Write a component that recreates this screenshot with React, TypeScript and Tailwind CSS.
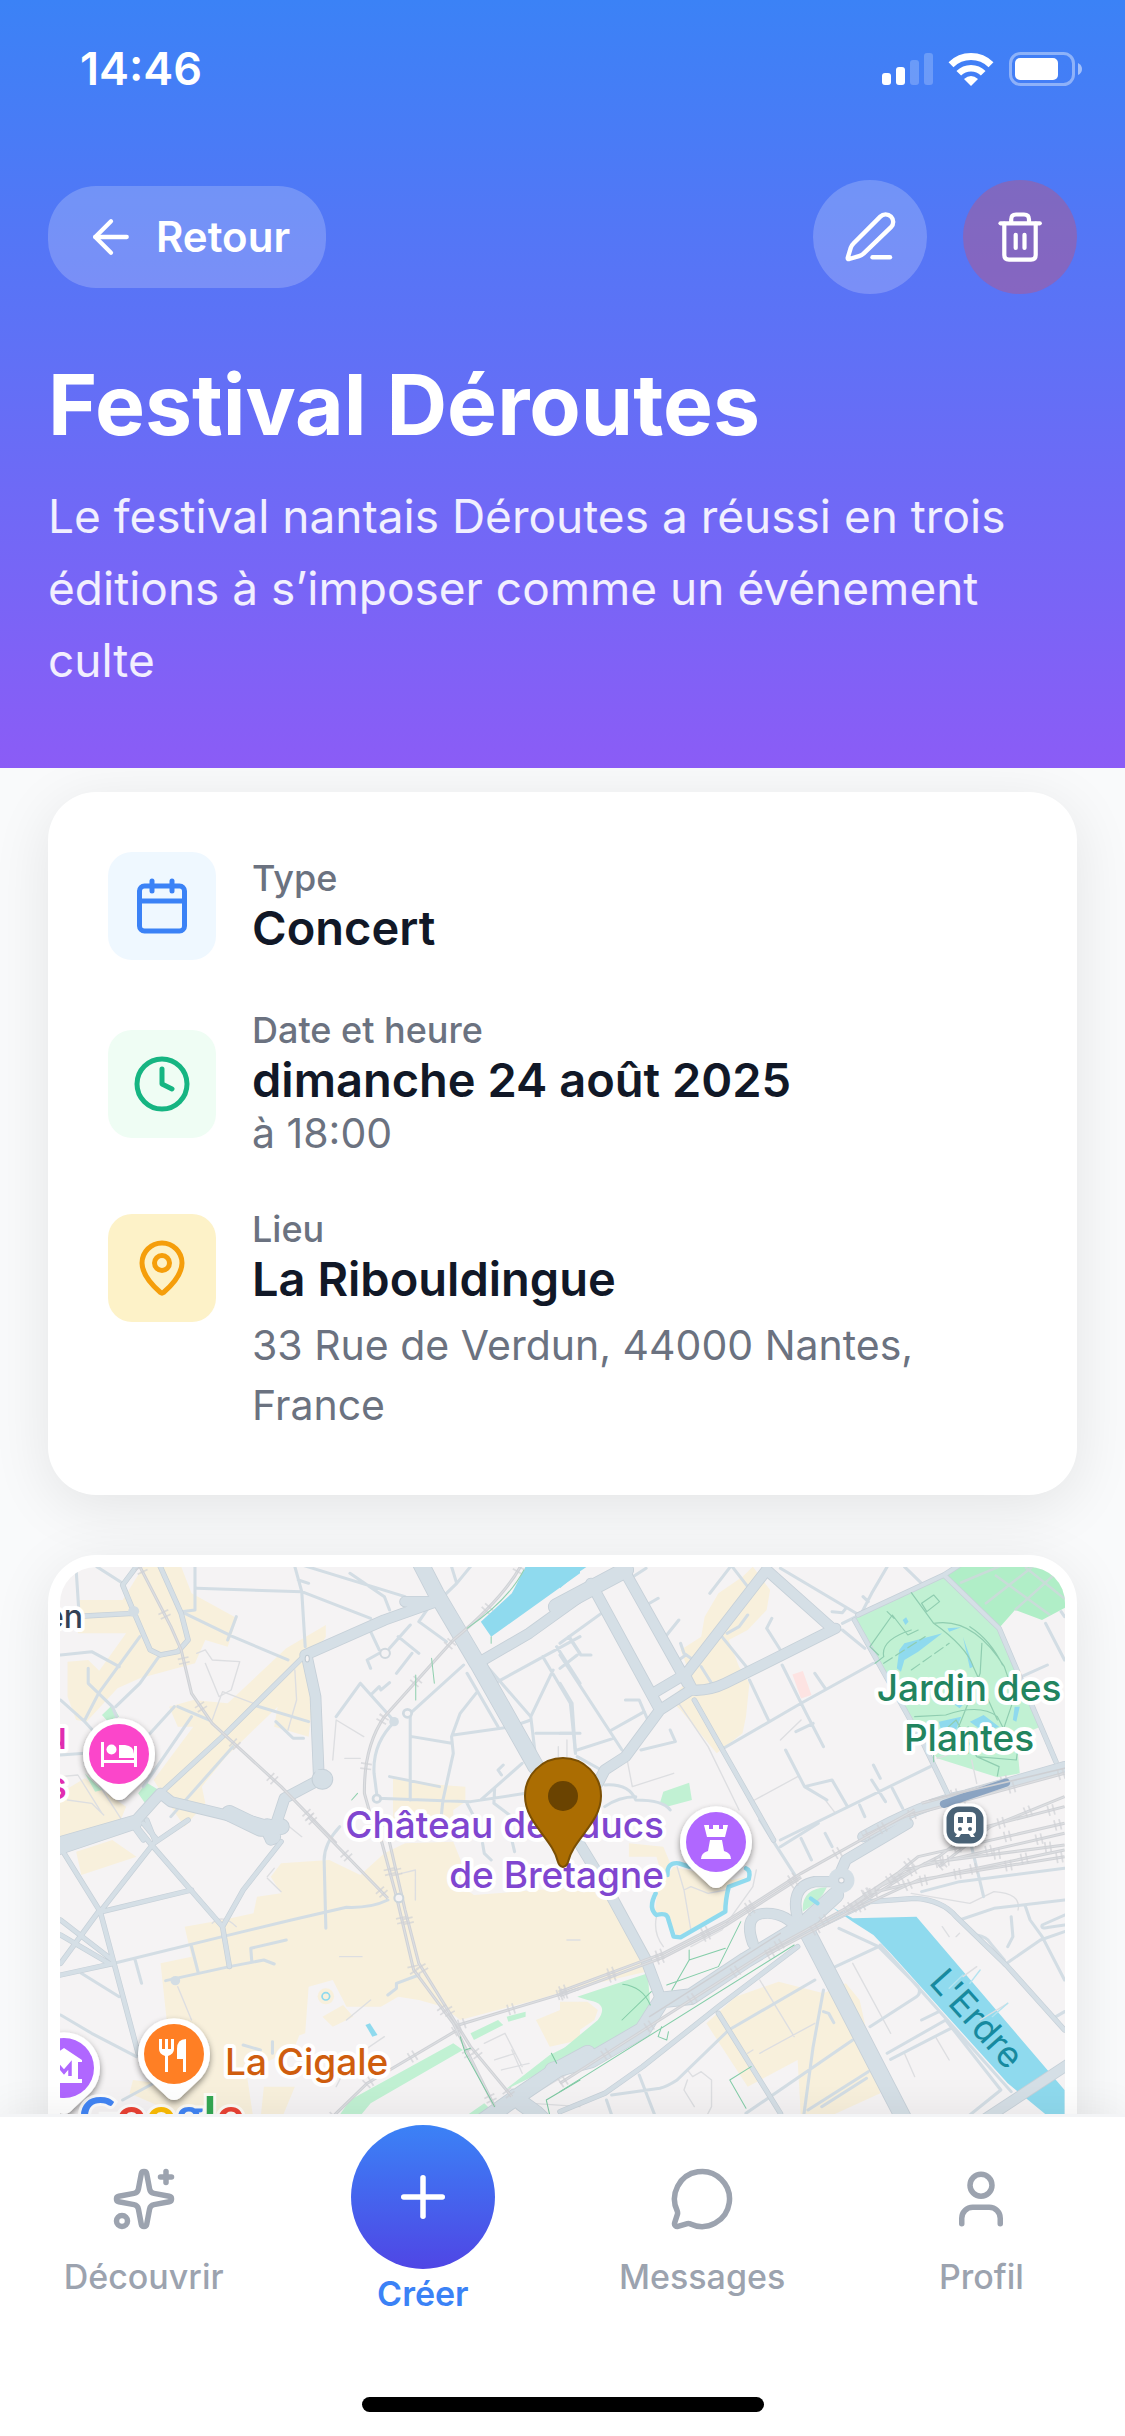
import React from 'react';
import { ArrowLeft, Calendar, Clock, MapPin, MessageCircle, Plus, Sparkles, User } from 'lucide-react';

/* ---------- Status bar ---------- */

function StatusBar() {
  return (
    <div className="flex h-[138px] items-center justify-between pl-20 pr-[43px] text-white">
      <span className="text-[45px] leading-[54px] font-semibold">14:46</span>
      <div className="flex items-center gap-[15px]">
        <svg width="51" height="32" viewBox="0 0 51 32" fill="#fff" aria-label="Réseau">
          <rect x="0" y="20" width="9" height="12" rx="3" />
          <rect x="14" y="14" width="9" height="18" rx="3" />
          <rect x="28" y="7" width="9" height="25" rx="3" opacity=".22" />
          <rect x="42" y="0" width="9" height="32" rx="3" opacity=".22" />
        </svg>
        <svg width="46" height="33" viewBox="0 0 46 33" aria-label="Wi-Fi">
          <path d="M3 11.8A28.500 28.500 0 0 1 43 11.800" fill="none" stroke="#fff" strokeWidth="7" />
          <path d="M10.800 20.300A17 17 0 0 1 35.200 20.300" fill="none" stroke="#fff" strokeWidth="6.500" />
          <path d="M23 33L16 26Q23 20 30 26Z" fill="#fff" />
        </svg>
        <svg width="73" height="34" viewBox="0 0 73 34" aria-label="Batterie">
          <rect x="1.5" y="1.5" width="63" height="31" rx="10" fill="none" stroke="#fff" strokeWidth="3" opacity=".4" />
          <rect x="6" y="6" width="43" height="22" rx="5" fill="#fff" />
          <path d="M69 11Q73 13 73 17T69 23Z" fill="#fff" opacity=".5" />
        </svg>
      </div>
    </div>
  );
}

function PencilIcon() {
  return (
    <svg width="54" height="54" viewBox="0 0 54 54" fill="none" stroke="currentColor" strokeWidth="4.4" strokeLinecap="round" strokeLinejoin="round">
      <path d="M37.3 6.6A7.4 7.4 0 0 1 48 17.2L20.5 43.6Q18.6 45.3 16 46.1L6.2 49Q4.4 49.4 4.8 47.6L7.8 37.6Q8.4 35.5 10.2 33.8Z" />
      <path d="M29.5 47.3H47" />
    </svg>
  );
}

function TrashIcon() {
  return (
    <svg width="54" height="54" viewBox="0 0 54 54" fill="none" stroke="currentColor" strokeWidth="4.2" strokeLinecap="round" strokeLinejoin="round">
      <path d="M7.5 13.3H46.8" />
      <path d="M18.2 13V9.4Q18.2 4.5 23 4.5H31Q36 4.5 36 9.4V13" />
      <path d="M11.3 13.5V45Q11.3 49.6 16 49.6H38Q42.7 49.6 42.7 45V13.5" />
      <path d="M22.7 24.8V38M31.5 24.8V38" />
    </svg>
  );
}

function Header() {
  return (
    <header className="relative z-10 shrink-0 bg-linear-to-b/srgb from-[#3b82f6] to-[#8b5cf6]">
      <StatusBar />
      <div className="px-12 pt-[42px] pb-[72px] text-white">
        <div className="flex items-center justify-between">
          <button type="button" className="flex h-[102px] items-center gap-[18px] rounded-[48px] bg-white/20 px-9">
            <ArrowLeft size={54} strokeWidth={1.9} />
            <span className="text-[42px] leading-[48px] font-semibold">Retour</span>
          </button>
          <div className="flex gap-9">
            <button type="button" aria-label="Modifier" className="flex size-[114px] items-center justify-center rounded-full bg-white/20">
              <PencilIcon />
            </button>
            <button type="button" aria-label="Supprimer" className="flex size-[114px] items-center justify-center rounded-full bg-[#ef4444]/30">
              <TrashIcon />
            </button>
          </div>
        </div>
        <h1 className="mt-[60px] text-[84px] leading-[102px] font-bold">Festival Déroutes</h1>
        <p className="mt-6 text-[46px] leading-[72px] text-white/90">
          Le festival nantais Déroutes a réussi en trois éditions à s’imposer comme un événement culte
        </p>
      </div>
    </header>
  );
}

/* ---------- Details ---------- */

function Tile({ className, children }: { className: string; children: React.ReactNode }) {
  return <div className={`flex size-[108px] shrink-0 items-center justify-center rounded-3xl ${className}`}>{children}</div>;
}

function Field({ label, value, children }: { label: string; value: string; children?: React.ReactNode }) {
  return (
    <div className="min-w-0 flex-1">
      <div className="text-[36px] leading-[42px] font-medium text-[#6b7280]">{label}</div>
      <div className="text-[47px] leading-[57px] font-semibold text-[#111827]">{value}</div>
      {children}
    </div>
  );
}

function Details() {
  return (
    <section className="flex flex-col gap-[49px] rounded-[48px] bg-white p-[60px] shadow-[0_12px_60px_rgba(0,0,0,0.09)]">
      <div className="flex items-center gap-9">
        <Tile className="bg-[#eff8ff] text-[#3b82f6]">
          <Calendar size={60} />
        </Tile>
        <Field label="Type" value="Concert" />
      </div>
      <div className="flex items-center gap-9">
        <Tile className="bg-[#effdf4] text-[#16b582]">
          <Clock size={60} />
        </Tile>
        <Field label="Date et heure" value="dimanche 24 août 2025">
          <div className="text-[41px] leading-[51px] text-[#6b7280]">à 18:00</div>
        </Field>
      </div>
      <div className="flex items-start gap-9">
        <div className="pt-[6px]">
          <Tile className="bg-[#fdf2c8] text-[#f59e0b]">
            <MapPin size={60} />
          </Tile>
        </div>
        <Field label="Lieu" value="La Ribouldingue">
          <div className="mt-2 text-[41px] leading-[60px] text-[#6b7280]">33 Rue de Verdun, 44000 Nantes, France</div>
        </Field>
      </div>
    </section>
  );
}

/* ---------- Map ---------- */

const NW = 'translate(-20 -27) scale(.3444 .3333)';
const NE = 'translate(500 -27) scale(.3444 .3333)';
const SW = 'translate(-20 253) scale(.3444 .3333)';
const SE = 'translate(500 253) scale(.3444 .3333)';

type Sector = {
  at: string;
  sand: string;
  park: string;
  water: string;
  minor: string;
  mid: string;
  major: string;
  wide: string;
  faint: string;
  rail: string;
};

const SECTORS: Sector[] = [
  {
    at: NW,
    sand: 'M300 80H410L440 160L572 235L545 320L480 300L450 370L290 415L225 445L135 545L105 540L80 470V365L140 360L172 392L250 280H110V180H240ZM830 255L715 325L545 490L445 480L375 500L400 560L445 560L330 720L360 770L420 860L480 790L470 740L540 650L690 500L680 560L780 590L790 500L770 390L830 290ZM58 760L130 715L250 800L230 850L58 895ZM1025 715L1165 735L1235 740V785L1200 810V840H1025Z',
    park: 'M180 525L210 495L230 530L195 542ZM285 760L310 728L345 750L305 790ZM130 700L180 750L160 755Z',
    water: 'M1410 80H1568V100L1310 290L1280 245L1370 160Z',
    minor:
      'M165 80L240 130M450 80V210L410 215M455 145L760 155L960 235M740 80L760 155L770 320M410 215L560 290L720 360M745 70L1060 170M750 120L780 130M105 90L112 200M60 345L150 335L230 380M290 290L170 460L130 540M345 350L290 430L220 500M140 385V430L210 500L222 530M60 480L130 545L170 590M390 500L320 580M400 500L490 540M440 530L300 740M560 620L380 830M620 495L780 545M570 230L545 300M685 545L735 595H765M930 430L860 530M930 430L1030 545M1075 520V780M1075 520L1230 375M1030 545Q965 610 970 700L980 780M1080 590L1195 610M1270 455L1220 520L1195 590L1200 640L1170 780L1165 830M1200 585L1370 560L1425 540M980 775L1250 785L1410 760M1280 780L1400 670M1015 710L1160 740M1320 430L1568 290M1290 370L1425 530L1440 660M1425 530L1490 390M1240 400L1330 560M1440 580H1568M960 275L985 330M1015 325L1075 255M1040 290L1100 340M1035 400L1080 340M985 340L950 360L960 385M1100 245L1130 200M1100 245L1180 305M1195 80L1210 130L1250 80M1180 160L1210 130M60 645L130 640M900 100L1000 170L1015 210M1460 350L1540 490L1555 640M1500 320L1568 430M1540 295L1568 340M960 465L985 440L990 450L1015 428M1320 745L1318 790L1370 830M1345 675L1330 690L1340 705M1240 790L1260 830',
    mid: 'M770 345L540 580L350 760M280 80L240 135L270 210L320 330L350 345L400 335L430 300L410 220L345 70M270 220L130 228M300 850L340 900M275 865L300 900',
    major: 'M770 345L1000 240L1150 185M1060 185H1140M775 350L800 470L810 720L710 775L670 900M670 860L620 845L380 785L350 760M350 760L280 840L60 905M1270 370L1420 280L1568 170',
    wide: 'M1100 60L1150 160L1270 370M1265 360L1440 680',
    faint: 'M455 340L480 330L500 360L580 365L555 450L520 470L480 370M530 455L500 540M530 455L620 490M740 390L745 480L720 570M850 660L860 540L940 590M885 655L930 655M60 710L110 705L180 820M150 700L250 860M80 780L150 790L185 825M1505 620V650M1530 600V650',
    rail: 'M290 80L380 260L410 330L440 460L500 550L700 740L860 910M1395 80Q1340 180 1200 300L1000 530Q940 620 942 760L980 900',
  },
  {
    at: NE,
    sand: 'M560 80L610 150L600 210L545 270L490 300L520 380L550 430L540 530L530 580L455 640L350 510L320 480L380 410L350 330L410 290L420 230L460 160L530 110Z',
    park: 'M855 235L1115 105L1275 265L1395 560L1325 590L1335 700L1270 712L1095 655L1000 510ZM290 790L300 755L375 728L383 780L310 800Z',
    water: 'M0 80H78L50 100L0 145ZM985 330L1000 310L1110 280L1040 335L1000 360L990 395L978 385ZM1125 265L1165 262L1130 275ZM1170 290L1200 380L1190 385ZM1100 545L1165 530L1150 570L1105 565ZM1190 545L1230 525L1275 560L1230 575ZM1320 500L1335 500L1325 545L1315 540ZM1140 490H1175L1160 505ZM995 240L1005 232L1012 245L1003 255Z',
    minor:
      'M0 310L120 220M0 345L180 630M25 290L60 345H90M0 385L50 345M150 570L245 515M50 630L155 595M235 630L335 605L320 570M190 480H230L255 540M0 430L35 490L45 640M0 580H40M310 285L345 240M205 115L250 85M260 190L285 175M350 310L360 340L380 355M345 360L365 345M435 160L495 80M500 80L545 140M470 290L545 385M485 280L520 260L545 225M640 330L600 265L615 235M410 380L440 430M550 420L605 540M645 375L715 520L765 620M740 400L770 445M910 370L700 490L475 625M685 575L735 550M640 85L860 220M790 215L820 218L830 205M875 220L905 160L950 80M880 170L895 185M1000 80L1050 130M820 270L885 325M1075 680L640 900M655 630L710 740L775 780M710 740L790 720L835 800M910 675L930 715M905 720L945 785M965 745L995 805M870 795L885 830M1410 250L1465 360M1340 410L1415 375M1455 215L1465 230M130 735Q200 730 220 780Q300 780 320 810M130 800Q170 770 220 770M50 650L120 690M820 250L860 230',
    mid: 'M390 480L620 900M855 240L1050 600L1125 760M865 225L1115 105L1160 75M1115 105L1275 265L1440 665',
    major: 'M90 130L285 500M180 80L370 430M600 90L360 410M600 90L790 265M800 265L480 430Q430 455 380 450L290 510L190 650L130 690L110 730M270 460L360 405M360 400L385 450M1465 680L1180 765Q1050 790 880 890',
    wide: 'M-10 200L190 90',
    faint: 'M345 490L430 620L520 810M565 780L690 710M195 660L210 740L330 700M1095 655L1140 640M1195 660L1210 730M110 140L180 120M770 780L800 820M700 540L640 600',
    rail: 'M1465 700L1180 780L1000 830L880 890M1300 720L1050 790',
  },
  {
    at: SW,
    sand: 'M1060 70L1200 65L1225 130V200L1260 225L1568 200V500L1440 540L1220 600L1170 560L1100 540L1040 530L990 560L890 560L850 480L780 500L770 640L690 670L560 720L450 760L370 620L350 430L440 410L420 320L530 300L620 280L630 230L700 220L670 170L700 130L840 120L930 165L1000 100ZM105 95L210 60L280 110L120 165ZM58 0H240L58 80ZM820 590L880 555L910 590L850 620ZM1440 600L1568 545V660L1480 680ZM500 700L690 660L770 600L740 680L600 760L620 900H440L260 820L270 780L340 790ZM650 800H740L700 900H640Z',
    park: 'M860 900L900 840L1200 670L1228 690L960 850L920 900ZM1250 640L1330 600L1345 615L1260 660ZM1355 590L1410 575V590L1360 605ZM1350 810L1480 705L1568 660V700L1430 770ZM1220 900L1290 850L1310 870L1280 900Z',
    water: 'M945 615L958 610L980 645L965 650Z',
    minor:
      'M215 430L530 350L730 300L890 262Q960 265 1010 240M365 482L550 440L650 420L680 432M440 380L460 460M275 415L295 490M615 425L612 385L715 360M830 325L825 120Q825 70 870 20M120 460L230 530M60 585L150 640L280 710M1010 525L1035 505V490L1100 465M240 840L330 790M1285 70L1290 100L1310 120M1370 60L1378 95M590 675L640 690M675 665V700',
    mid: 'M70 100L175 275L215 430L285 700M175 275L330 70L430 0M270 5L320 70L530 320L550 440M310 0L335 65M530 320L590 210L700 65M180 275L440 210M170 275L60 430M60 300L210 420M60 345L200 430M60 465L215 430',
    major: 'M50 90L280 10',
    wide: 'M550 -20L640 25L700 20M660 20L675 50M1290 900L1400 820L1500 750L1590 700M1380 830L1400 850L1440 880L1480 920',
    faint: 'M660 170L680 145M660 175L700 215M500 310Q530 280 570 320M870 410H935M1290 670L1350 640L1400 740M1320 720L1380 700M1340 750L1420 730M1370 690L1400 760M890 600L960 540M1000 650L900 720L860 800M1050 160L1090 150V240M1420 830L1568 740M1430 850L1568 860M400 500L440 600M1530 360H1568M700 0L760 50',
    rail: 'M780 -10L1010 235M975 0L1035 230L1085 450L1200 610L1320 860M1000 0L1060 270L1100 430L1250 680L1370 830M1215 615L1568 505M840 900L950 790L1220 625',
  },
  {
    at: SE,
    sand: 'M0 210H130L260 400L250 455L0 515ZM200 70L300 80L320 130L300 180L280 110H200ZM285 200L330 140L500 180L540 170L490 200L480 270L340 350L310 280L275 280ZM0 545L80 545L110 570L100 600L0 670ZM425 610L510 530L635 485L765 520L830 490L870 540L930 820L760 900H700L690 720L545 800Z',
    park: 'M50 530L255 460L262 560L240 600L130 680L40 718L5 690L110 600Q145 550 80 540ZM705 275Q700 205 775 202Q760 240 705 275Z',
    water: 'M790 262L850 295L1035 290L1465 810V900H1430L1300 790L960 400L910 345L850 305Z',
    minor:
      'M800 440L925 380L810 325M925 380L1040 500Q1050 520 1035 530L900 620M930 375L1310 815M765 510L735 680L708 885M740 480L490 630L340 780Q310 800 290 805L150 825M850 660L540 880M895 755L720 870M890 775L760 860M230 765L275 885M950 700L1120 600L1280 810M960 718L1135 625M1050 600L1100 575M580 0L685 170M640 80L750 10M700 55L730 120M770 40L790 80M1050 215L1160 185L1465 145M1160 300L1260 265L1465 240M1350 255L1365 300L1400 350L1465 480M1290 435L1395 360L1465 335M1210 345Q1240 350 1250 370L1290 420M1310 290L1315 350L1300 380M1465 285L1400 315Q1395 328 1420 322L1465 315M1195 80L1230 230M135 840L150 885M1440 590L1465 575M765 575L780 580L795 608M1190 885L1280 810',
    mid: 'M690 380L460 560L240 740L130 820L0 875M460 580L640 880M730 330L900 245L1030 235Q1110 240 1150 290L1300 440L1465 630',
    major: 'M50 60L150 230L250 420L290 530M560 370Q530 280 600 280Q660 280 690 330M695 310Q660 200 740 185H820M805 180L830 120L1010 10M1480 730L1230 900',
    wide: 'M-20 750L90 720L240 630L295 540L380 530L540 420L700 320L800 225M720 340L860 620L1000 900',
    faint: 'M340 140L360 210L380 200L430 220L480 210M360 210L380 330M580 480L680 650M850 430L960 640M580 700L740 610M300 380Q270 340 280 290M380 380L470 330L560 200L570 150M1020 220L1190 250L1260 215Q1340 220 1330 270M1000 700L1030 770M1090 650L1130 720M1110 320L1130 350M1150 350L1160 340M370 750L385 770L410 755L440 780V860L420 900M370 780L360 810L390 860M560 690L545 700M1170 470L1210 440M1220 600L1300 550',
    rail: 'M0 515L300 400L480 305L700 160L1030 -30M0 527L300 412L480 317L700 172M0 790L600 395L830 265L980 160L1040 110L1465 10M600 405L840 275L1040 180L1465 110M830 270L1000 150L1465 40M850 265L1060 130L1465 75M880 225L1100 110L1200 30L1465 -40M900 220L1140 160L1465 90M1100 140L1250 20L1465 -70',
  },
];

function Pin({ x, y, color, children }: { x: number; y: number; color: string; children: React.ReactNode }) {
  return (
    <g transform={`translate(${x} ${y})`}>
      <path d="M0 46Q-5 46 -9 41L-27 24A36 36 0 1 1 27 24L9 41Q5 46 0 46Z" fill="#fff" filter="url(#pin-shadow)" />
      <circle r="30" fill={color} />
      <g fill="#fff">{children}</g>
    </g>
  );
}

function CityMap() {
  return (
    <svg
      viewBox="0 0 1005 600"
      preserveAspectRatio="xMidYMin slice"
      className="block h-[600px] w-full rounded-[36px] bg-[#f5f3f4] font-[Inter,sans-serif]"
      role="img"
      aria-label="Carte du quartier"
    >
      <defs>
        <filter id="pin-shadow" x="-30%" y="-30%" width="160%" height="170%">
          <feDropShadow dx="0" dy="3" stdDeviation="3" floodOpacity=".45" />
        </filter>
      </defs>

      {SECTORS.map((s) => (
        <g key={s.at} transform={s.at}>
          <path d={s.sand} fill="#f8f0dc" />
          <path d={s.park} fill="#c1f1d3" />
          <path d={s.water} fill="#8fdaee" />
        </g>
      ))}
      <path d="M884 8L904 -5H1010V38L982 53L955 43L940 60Z" fill="#b0eec7" />
      <path d="M900 16L950 -5M925 37L985 -10M935 8L990 48M965 0L1005 32M955 43L1005 -2" stroke="#c9dcd8" strokeWidth="2.5" />

      <g fill="none" strokeLinecap="round" strokeLinejoin="round">
        {SECTORS.map((s) => (
          <g key={s.at} transform={s.at} stroke="#dddee1">
            <path d={s.faint} strokeWidth="4" />
            <path d={s.minor} stroke="#d3dde4" strokeWidth="9" />
          </g>
        ))}
        {SECTORS.map((s) => (
          <g key={s.at} transform={s.at} stroke="#c6d0d8">
            <path d={s.mid} strokeWidth="16" />
            <path d={s.major} strokeWidth="34" />
            <path d={s.wide} strokeWidth="50" />
          </g>
        ))}
        {SECTORS.map((s) => (
          <g key={s.at} transform={s.at} stroke="#d5dfe6">
            <path d={s.mid} strokeWidth="12" />
            <path d={s.major} strokeWidth="29" />
            <path d={s.wide} strokeWidth="45" />
          </g>
        ))}
        {SECTORS.map((s) => (
          <g key={s.at} transform={s.at} stroke="#d0d2d6" strokeLinecap="butt">
            <path d={s.rail} strokeWidth="9" />
            <path d={s.rail} stroke="#dddfe2" strokeWidth="3" />
            <path d={s.rail} strokeWidth="32" strokeDasharray="5 10 5 130" opacity=".7" />
          </g>
        ))}
        <g transform={NW}>
          <circle cx="820" cy="718" r="30" fill="#d5dfe6" stroke="#c6d0d8" strokeWidth="3" />
          <path d="M800 740V690H824V735" fill="#d5dfe6" />
          <circle cx="1002" cy="340" r="14" stroke="#d0d8de" strokeWidth="6" />
          <circle cx="1067" cy="520" r="12" fill="#f5f3f4" stroke="#d0dae1" strokeWidth="8" />
          <circle cx="978" cy="776" r="11" fill="#f5f3f4" stroke="#d0dae1" strokeWidth="8" />
          <circle cx="1028" cy="545" r="14" fill="#d3dde4" />
          <circle cx="272" cy="214" r="16" fill="#d3dde4" />
          <ellipse cx="776" cy="356" rx="6" ry="10" fill="#f5f3f4" stroke="#bfcad2" strokeWidth="3" />
          <path d="M1405 90Q1360 180 1240 265M1310 290V310M1091 405V480M1137 355L1145 430M905 780L922 760" stroke="#8fd0ae" strokeWidth="3" />
        </g>
        <g transform={SW}>
          <circle cx="393" cy="482" r="14" fill="#d3dde4" />
          <circle cx="1042" cy="234" r="13" fill="#f5f3f4" stroke="#ccd5db" strokeWidth="6" />
          <circle cx="830" cy="529" r="36" fill="#f5f3f4" />
          <circle cx="830" cy="529" r="24" fill="#f8f0dc" />
          <circle cx="830" cy="529" r="11" stroke="#8fdaee" strokeWidth="5" />
          <path d="M1220 650L1235 700L1320 860M1235 690L1250 685M1485 700L1500 730M1568 780L1470 840L1480 885" stroke="#7cc8a0" strokeWidth="3" />
        </g>
        <g transform={SE}>
          <path d="M312 165Q310 125 345 130L375 140M278 220Q255 265 280 285Q312 275 315 300L330 350L350 352L480 275Q480 240 490 200L548 178Q555 150 540 145" stroke="#8fdaee" strokeWidth="13" />
          <path d="M728 235L748 250" stroke="#8fdaee" strokeWidth="12" />
          <ellipse cx="603" cy="312" rx="28" ry="16" fill="#f5f3f4" />
          <circle cx="817" cy="181" r="38" fill="#d5dfe6" />
          <circle cx="817" cy="181" r="8" fill="#f5f3f4" stroke="#c3cdd5" strokeWidth="3" />
          <path d="M0 815L680 375M325 510L375 420V390M310 495L460 440L525 305M375 420L480 385M180 600L265 515M182 493Q240 500 262 555M555 740L493 780L540 865M295 620L285 650L310 660L315 635" stroke="#83cda8" strokeWidth="3" />
          <path d="M260 590L640 340" stroke="#cdcfd3" strokeWidth="4" />
          <path d="M1130 505L1170 465M1190 490L1220 450M1255 590L1300 550" stroke="#b5e4f0" strokeWidth="4" />
        </g>
        <g transform={NE} stroke="#8fcdb0" strokeWidth="3.5">
          <path d="M1020 158L1085 250Q1180 320 1200 380L1270 540M900 320L965 225L1010 285L1040 270M900 320L925 345M1050 190L1085 165L1102 185L1065 215ZM1085 250Q1200 230 1290 380L1320 470L1290 560M915 370L940 350Q930 300 1020 270M1190 260Q1250 300 1285 375M1225 310L1220 400L1150 580M1030 530L1120 525Q1220 490 1270 530L1305 600M1085 665V600L1150 540L1210 650L1325 660L1330 620M1210 650L1275 680L1270 708M1185 560V640M950 215L970 235" />
          <path d="M940 370L1060 290M1020 390L1130 310" strokeDasharray="30 12" />
          <path d="M1115 792L1295 728" stroke="#8ba4c2" strokeWidth="24" />
          <path d="M1075 780L1465 685" stroke="#cdcfd3" strokeWidth="5" />
          <path d="M690 398L715 470" stroke="#fde3e2" strokeWidth="32" strokeLinecap="butt" />
        </g>
      </g>

      <g fontSize="38" fontWeight="500" stroke="#fff" strokeWidth="8" strokeLinejoin="round" style={{ paintOrder: 'stroke' }}>
        <g fontSize="37" fill="#22845f" textAnchor="middle">
          <text x="909" y="134">Jardin des</text>
          <text x="909" y="184">Plantes</text>
        </g>
        <g fontSize="37" fill="#8046d0" textAnchor="end">
          <text x="604" y="271">Château des ducs</text>
          <text x="604" y="321">de Bretagne</text>
        </g>
        <text x="165" y="508" fontSize="37" fill="#cf5d0e">La Cigale</text>
        <text x="23" y="61" fontSize="32" textAnchor="end" fill="#334155">en</text>
        <g fill="#e02db0" textAnchor="end">
          <text x="7" y="182">u</text>
          <text x="7" y="232">s</text>
        </g>
      </g>
      <text transform="translate(868 416) rotate(48)" fontSize="36" fill="#178a9f">L'Erdre</text>

      <Pin x={59} y={187} color="#fb46ca">
        <path d="M-18 -12H-15V6H15V-8H18V13H15V9H-15V13H-18Z" />
        <circle cx="-7.5" cy="-4.5" r="5" />
        <path d="M0 -9H6Q15 -8 15 0V4H0Z" />
      </Pin>
      <Pin x={656} y={275} color="#b067ff">
        <path d="M-12 -17H-7V-13H-3V-17H3V-13H7V-17H12L9 -5H-9ZM-6 -2H6L8 9Q15 11 15 17H-15Q-15 11 -8 9Z" />
      </Pin>
      <Pin x={4} y={501} color="#b067ff">
        <path d="M-18 -8L0 -20L18 -8V-6H14V11H18V15H-18V11H-14V-6H-18Z" />
        <path d="M-6 8V-3L0 4L6 -3V8" fill="none" stroke="#b067ff" strokeWidth="3.5" />
      </Pin>
      <Pin x={114} y={487} color="#ff7f24">
        <path d="M-15 -15H-12V-5H-9V-15H-6V-5H-3V-15H0V-5Q0 0 -6 2V18H-9V2Q-15 0 -15 -5ZM12 -15V18H9V5H3V-5Q3 -15 12 -15Z" />
      </Pin>

      <g transform="translate(905 258)">
        <rect x="-20" y="-20" width="40" height="40" rx="14" fill="#4a6276" stroke="#fff" strokeWidth="3" filter="url(#pin-shadow)" />
        <path d="M-11 -8Q-11 -13 -5 -13H5Q11 -13 11 -8V5Q11 8 8 9L10 12H6L4 9H-4L-6 12H-10L-8 9Q-11 8 -11 5Z" fill="#fff" />
        <path d="M-7 -8H-2V-2H-7ZM2 -8H7V-2H2Z" fill="#4a6276" />
        <circle cx="-5" cy="4" r="2" fill="#4a6276" />
        <circle cx="5" cy="4" r="2" fill="#4a6276" />
      </g>

      <path d="M503 300Q499 299 498 295C493 272 465 256 465 229A38 38 0 0 1 541 229C541 256 513 272 508 295Q507 299 503 300Z" fill="#ab6d02" stroke="#7b4f03" strokeWidth="2" />
      <circle cx="503" cy="229" r="15" fill="#6a4301" />

      <text x="19" y="567" fontSize="52" fontWeight="700" fontFamily="Lato, sans-serif" stroke="#fff" strokeWidth="6" strokeOpacity=".7" style={{ paintOrder: 'stroke' }}>
        <tspan fill="#4285f4">G</tspan>
        <tspan fill="#ea4335">o</tspan>
        <tspan fill="#fbbc05">o</tspan>
        <tspan fill="#4285f4">g</tspan>
        <tspan fill="#34a853">l</tspan>
        <tspan fill="#ea4335">e</tspan>
      </text>
    </svg>
  );
}

/* ---------- Bottom navigation ---------- */

function NavItem({ icon, label }: { icon: React.ReactNode; label: string }) {
  return (
    <a href="#" className="flex flex-1 flex-col items-center gap-6 pt-[49px] text-[#9ca3af]">
      {icon}
      <span className="text-[34px] leading-[42px] font-medium">{label}</span>
    </a>
  );
}

function BottomNav() {
  return (
    <nav className="relative z-10 flex shrink-0 flex-col border-t-3 border-[#f3f4f6] bg-white shadow-[0_-6px_36px_rgba(0,0,0,0.06)]">
      <div className="flex h-[280px] items-start px-1">
        <NavItem icon={<Sparkles size={66} />} label="Découvrir" />
        <a href="#" className="flex flex-1 flex-col items-center gap-1 pt-2 text-[#3b82f6]">
          <span className="flex size-36 items-center justify-center rounded-full bg-linear-to-b/srgb from-[#3b82f6] to-[#4f46e5] text-white">
            <Plus size={66} />
          </span>
          <span className="text-[34px] leading-[42px] font-semibold">Créer</span>
        </a>
        <NavItem icon={<MessageCircle size={66} />} label="Messages" />
        <NavItem icon={<User size={66} />} label="Profil" />
      </div>
      <div className="mb-6 h-[15px] w-[402px] self-center rounded-full bg-black" />
    </nav>
  );
}

export default function App() {
  return (
    <div className="flex h-screen flex-col overflow-hidden bg-[#f9fafb] font-[Inter,sans-serif]">
      <Header />
      <main className="flex min-h-0 flex-1 flex-col gap-[60px] overflow-hidden px-12 pt-6">
        <Details />
        <section className="rounded-[48px] bg-white p-3 shadow-[0_12px_60px_rgba(0,0,0,0.09)]">
          <CityMap />
        </section>
      </main>
      <BottomNav />
    </div>
  );
}
